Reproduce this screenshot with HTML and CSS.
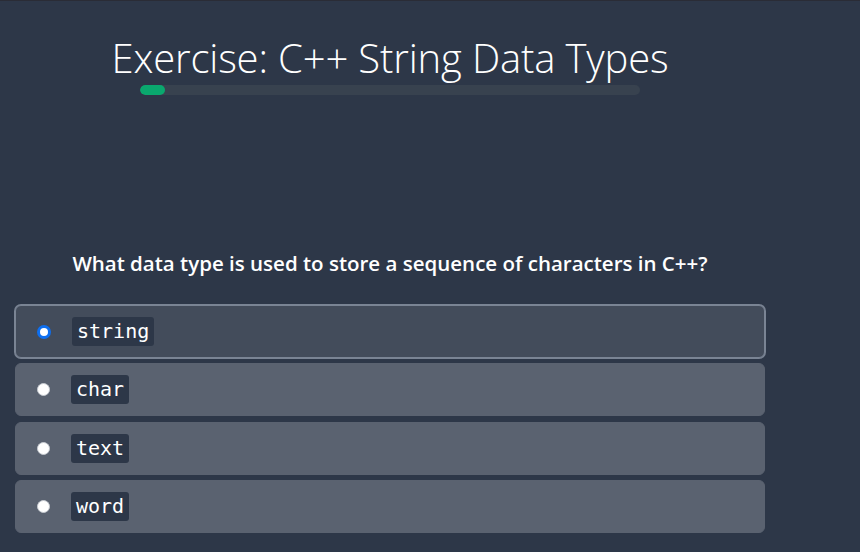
FILE: index.html
```html
<!DOCTYPE html>
<html>
<head>
<meta charset="utf-8">
<link rel="stylesheet" href="styles.css">
</head>
<body>
<div class="quiz">
  <header class="head">
    <h1 class="title">Exercise: C++ String Data Types</h1>
    <div class="progress"><div class="progress-fill" style="width:25px"></div></div>
  </header>
  <p class="question">What data type is used to store a sequence of characters in C++?</p>
  <div class="options">
    <label class="option selected"><span class="radio"></span><code class="code">string</code></label>
    <label class="option"><span class="radio"></span><code class="code">char</code></label>
    <label class="option"><span class="radio"></span><code class="code">text</code></label>
    <label class="option"><span class="radio"></span><code class="code">word</code></label>
  </div>
</div>
</body>
</html>
```

FILE: styles.css
```css
html, body {
  margin: 0;
  padding: 0;
}
body {
  background: #2d3748;
  border-top: 1px solid #2a2c36;
  height: 551px;
  overflow: hidden;
  font-family: "Open Sans", "Noto Sans", sans-serif;
  color: #ffffff;
}
.quiz {
  width: 780px;
  box-sizing: border-box;
  padding: 0 15px;
}
.head {
  display: flex;
  flex-direction: column;
  align-items: center;
  padding-top: 30px;
}
.title {
  margin: 0;
  font-weight: 300;
  font-size: 40px;
  line-height: 54px;
  letter-spacing: -0.15px;
}
.progress {
  width: 500px;
  height: 10px;
  border-radius: 5px;
  background: #38424f;
  overflow: hidden;
}
.progress-fill {
  height: 100%;
  border-radius: 5px;
  background: #0aa86e;
}
.question {
  margin: 154px 0 0;
  text-align: center;
  font-weight: 600;
  font-size: 20.5px;
  line-height: 28px;
}
.options {
  margin-top: 28px;
  display: flex;
  flex-direction: column;
  gap: 5.33px;
}
.option {
  display: flex;
  align-items: center;
  height: 53px;
  box-sizing: border-box;
  padding-left: 21px;
  border: 1px solid #5a6270;
  border-radius: 6px;
  background: #5a6270;
}
.option.selected {
  background: #434c5b;
  border-color: #7a8494;
  box-shadow: 0 0 0 1px #7a8494;
}
.radio {
  width: 13px;
  height: 13px;
  box-sizing: border-box;
  border-radius: 50%;
  background: #ffffff;
  border: 1px solid #c8ccd2;
  flex: none;
}
.option.selected .radio {
  width: 14px;
  height: 14px;
  border: 3px solid #0e6ff0;
  background: #ffffff;
}
.code {
  margin-left: 21px;
  padding: 0 5px;
  height: 29px;
  line-height: 29px;
  border-radius: 3px;
  background: #2d3748;
  font-family: "DejaVu Sans Mono", "Liberation Mono", monospace;
  font-size: 20px;
  color: #ffffff;
}
```
